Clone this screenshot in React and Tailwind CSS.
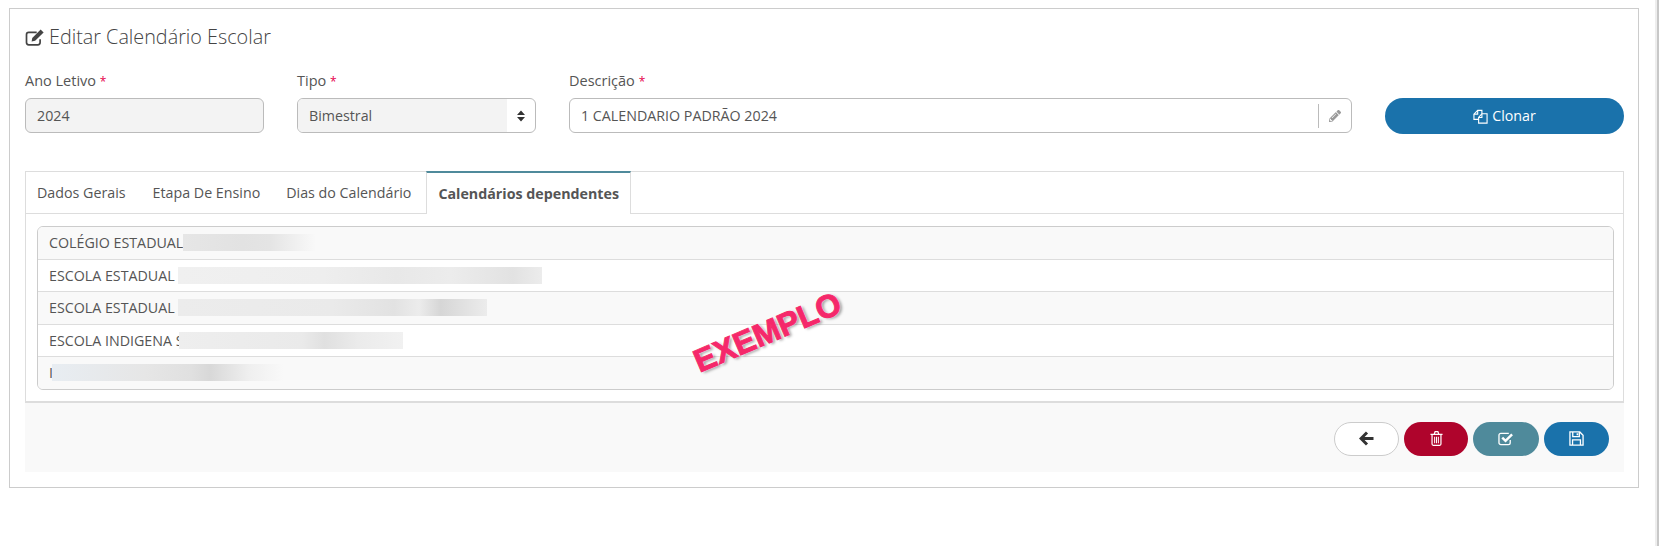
import React from 'react';
import { FaPencilAlt } from 'react-icons/fa';

const rows = [
  { label: 'COLÉGIO ESTADUAL', blur: 'w-[133px] ml-0 bg-[linear-gradient(90deg,#e6e6e6,#e2e2e2_45%,#e4e4e4_65%,#f9f9f9)]', tint: true },
  { label: 'ESCOLA ESTADUAL', blur: 'w-[364px] ml-[3px] bg-[linear-gradient(90deg,#f0f0f0,#eeeeee_40%,#e8e8e8_60%,#ececec_75%,#e2e2e2_92%,#ececec)]' },
  { label: 'ESCOLA ESTADUAL', blur: 'w-[309px] ml-[3px] bg-[linear-gradient(90deg,#ececec,#eaeaea_50%,#e2e2e2_70%,#ececec_78%,#d6d6d6_85%,#ececec)]', tint: true },
  { label: 'ESCOLA INDIGENA S', blur: 'w-[224px] -ml-[5px] bg-[linear-gradient(90deg,#eeeeee,#eaeaea_55%,#e0e0e0_65%,#ebebeb_80%,#f1f1f1)]' },
  { label: 'I', blur: 'w-[232px] -ml-[1px] bg-[linear-gradient(90deg,#e8edf2,#e6e6e6_40%,#e0e0e0_60%,#d8d8d8_68%,#efefef_85%,#f9f9f9)]', tint: true },
];

const EditIcon = () => (
  <svg width="20" height="17" viewBox="0 0 17 15" className="text-[#444]">
    <path d="M13 9v3a2 2 0 0 1-2 2H3a2 2 0 0 1-2-2V5a2 2 0 0 1 2-2h7" fill="none" stroke="currentColor" strokeWidth="1.500" />
    <path d="M5.500 11l.6-3L13.500.5l2.600 2.600-7.500 7.300z" fill="currentColor" />
  </svg>
);

const CloneIcon = () => (
  <svg width="15" height="15" viewBox="0 0 16 16" fill="none" stroke="currentColor" strokeWidth="1.200">
    <path d="M6 11H1V5.500L5 1.500h4.500V5" />
    <path d="M5 1.500V5.500H1" />
    <path d="M6 9l3.500-4H15V15H6z" />
    <path d="M9.500 5V9H6" />
  </svg>
);

const ArrowIcon = () => (
  <svg width="15" height="15" viewBox="0 0 15 15" fill="none" stroke="#333" strokeWidth="3">
    <path d="M8 1.500L2 7.500l6 6M2.500 7.500H14.500" />
  </svg>
);

const TrashIcon = () => (
  <svg width="13" height="15" viewBox="0 0 14 16" fill="none" stroke="currentColor" strokeWidth="1.300">
    <path d="M.5 3.500h13M4.500 3.500l1-2.800h3l1 2.800" />
    <path d="M2.200 3.500V14a1.300 1.300 0 0 0 1.300 1.300h7a1.300 1.300 0 0 0 1.300-1.300V3.500" />
    <path d="M5 6v7M7 6v7M9 6v7" strokeWidth="1.100" />
  </svg>
);

const CheckIcon = () => (
  <svg width="16" height="15" viewBox="0 0 17 16" fill="none" stroke="currentColor">
    <path d="M13 9.500V12.500a2 2 0 0 1-2 2H3a2 2 0 0 1-2-2V4.500a2 2 0 0 1 2-2h8.500" strokeWidth="1.400" />
    <path d="M4.500 7l3.500 3.500L15 3.500" strokeWidth="2.600" />
  </svg>
);

const SaveIcon = () => (
  <svg width="15" height="15" viewBox="0 0 16 16" fill="none" stroke="currentColor" strokeWidth="1.400">
    <path d="M1 1h10.500L15 4.500V15H1z" />
    <path d="M4 1v5h7V1" />
    <path d="M3.800 15V9.500h8.400V15" />
    <path d="M9 2.500v2" strokeWidth="1.800" />
  </svg>
);

const Label = ({ children }) => (
  <label className="block h-[20px] text-[14.5px] leading-[20px] text-[#555] mb-[7px]">
    {children} <span className="text-[#e6004c] text-[12px] leading-none">*</span>
  </label>
);

const FooterButton = ({ className, children }) => (
  <button className={`flex items-center justify-center h-[34px] rounded-[17px] ${className}`}>{children}</button>
);

export default function App() {
  return (
    <div className="relative h-[546px] bg-white pt-[8px] pl-[9px] pr-[20px] font-['Open_Sans',sans-serif] text-[#555]">
      <div className="h-[480px] border border-[#ccc] pt-[13px] pl-[15px] pr-[14px]">
        <h3 className="flex items-center gap-[4px] h-[30px] text-[19.8px] font-light text-[#444]">
          <EditIcon />
          Editar Calendário Escolar
        </h3>

        <div className="flex mt-[19px]">
          <div className="w-[239px] mr-[33px]">
            <Label>Ano Letivo</Label>
            <div className="flex items-center h-[35px] px-[11px] rounded-[6px] border border-[#bbb] bg-[#f3f3f3] text-[14.25px]">2024</div>
          </div>
          <div className="w-[239px] mr-[33px]">
            <Label>Tipo</Label>
            <div className="flex items-center h-[35px] rounded-[6px] border border-[#bbb] bg-white text-[14.25px] overflow-hidden">
              <div className="flex-1 flex items-center h-full pl-[11px] bg-[#f3f3f3]">Bimestral</div>
              <svg className="w-[28px] h-[12px]" viewBox="0 0 28 12" fill="#333">
                <path d="M14 0.500 L18 5 L10 5 Z M14 11.500 L18 7 L10 7 Z" />
              </svg>
            </div>
          </div>
          <div className="w-[783px] mr-[33px]">
            <Label>Descrição</Label>
            <div className="flex items-center h-[35px] pl-[11px] rounded-[6px] border border-[#bbb] bg-white text-[14.25px]">
              <span className="flex-1">1 CALENDARIO PADRÃO 2024</span>
              <span className="h-[24px] border-l border-[#bbb] w-[33px] flex items-center justify-center">
                <FaPencilAlt className="text-[12px] text-[#999]" />
              </span>
            </div>
          </div>
          <button className="flex items-center justify-center gap-[4px] w-[239px] h-[36px] mt-[27px] rounded-[18px] bg-[#1a72ab] text-white text-[14.25px]">
            <CloneIcon />
            Clonar
          </button>
        </div>

        <div className="mt-[37px] border border-[#ddd] border-b-0">
          <div className="flex h-[42px] border-b border-[#ddd] text-[14.25px]">
            <div className="flex items-center pl-[11px] pr-[14px]">Dados Gerais</div>
            <div className="flex items-center px-[13px]">Etapa De Ensino</div>
            <div className="flex items-center pl-[13px] pr-[15px]">Dias do Calendário</div>
            <div className="flex items-center px-[11px] -mt-[1px] h-[43px] bg-white border-t-2 border-t-[#4f8a9b] border-x border-x-[#ddd] font-bold">Calendários dependentes</div>
          </div>
          <div className="pl-[11px] pr-[9px] pt-[12px] pb-[11px] border-b-2 border-[#ddd]">
            <div className="rounded-[6px] border border-[#ccc] overflow-hidden">
              {rows.map((r, i) => (
                <div key={i} className={`flex items-center px-[11px] text-[14.25px] ${i > 0 ? 'h-[32.5px] border-t border-[#ddd]' : 'h-[31.5px]'} ${r.tint ? 'bg-[#f9f9f9]' : 'bg-white'}`}>
                  <span>{r.label}</span>
                  <span className={`h-[17px] ${r.blur}`} />
                </div>
              ))}
            </div>
          </div>
        </div>

        <div className="flex items-start justify-end gap-[5px] h-[69px] pt-[19px] pr-[15px] bg-[#f9f9f9]">
          <FooterButton className="w-[65px] bg-white border border-[#ccc]">
            <ArrowIcon />
          </FooterButton>
          <FooterButton className="w-[64px] bg-[#af042c] text-white">
            <TrashIcon />
          </FooterButton>
          <FooterButton className="w-[66px] bg-[#4f8a9b] text-white">
            <CheckIcon />
          </FooterButton>
          <FooterButton className="w-[65px] bg-[#1a72ab] text-white">
            <SaveIcon />
          </FooterButton>
        </div>
      </div>

      <div className="absolute right-0 top-0 h-full w-[4px] border-l-2 border-[#eee] bg-[#c8c8c8]" />

      <div className="absolute left-[689px] top-[314px] -rotate-[23deg] font-['Liberation_Sans',sans-serif] font-bold text-[32px] leading-[36px] text-[#f5286a] [-webkit-text-stroke:1px_#f5286a] [text-shadow:0_0_2px_#fff,0_0_2px_#fff,2px_2px_3px_rgba(0,0,0,0.4)]">
        EXEMPLO
      </div>
    </div>
  );
}
